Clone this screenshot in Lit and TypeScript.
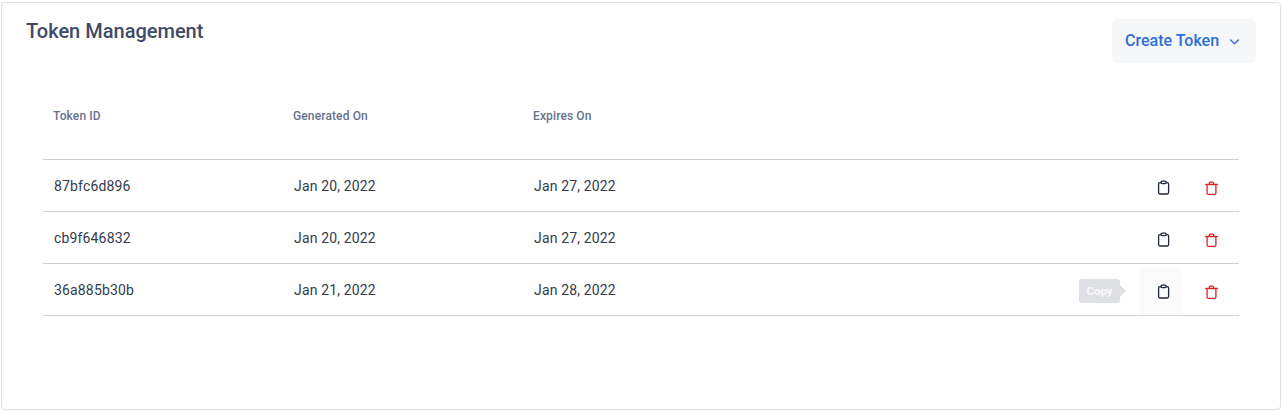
import { LitElement, html, css, svg } from "lit";
import { customElement, property } from "lit/decorators.js";

interface Token {
  id: string;
  generated: string;
  expires: string;
  active?: boolean;
}

const clipboardIcon = html`<svg width="13" height="16" viewBox="0 0 13 16" fill="none" stroke="#1f2937" stroke-width="1.3" stroke-linejoin="round">
  ${svg`<rect x="1.6" y="2.6" width="10" height="11.4" rx="1.4"></rect><rect x="4" y="1.1" width="5.2" height="2.6" rx="1.1" fill="#fff"></rect>`}
</svg>`;

const trashIcon = html`<svg width="14" height="16" viewBox="0 0 14 16" fill="none" stroke="#dc2626" stroke-width="1.3" stroke-linecap="round" stroke-linejoin="round">
  ${svg`<path d="M0.7 4.5H12.3M2.1 4.5V13Q2.1 14.3 3.4 14.3H9.6Q10.9 14.3 10.9 13V4.5M4.1 4.3L4.5 2.7Q4.7 2.1 5.4 2.1H7.6Q8.3 2.1 8.5 2.7L8.9 4.3"></path>`}
</svg>`;

@customElement("token-row")
export class TokenRow extends LitElement {
  @property({ attribute: false }) token!: Token;

  static styles = css`
    :host {
      display: grid;
      grid-template-columns: 240px 240px 1fr auto;
      height: 51px;
      border-bottom: 1px solid #cdd0d9;
      font-size: 14px;
      letter-spacing: 0.16px;
      color: #343b4d;
    }
    .cell {
      padding: 16px 0 0 11px;
      line-height: 20px;
    }
    .actions {
      display: flex;
      gap: 7px;
      padding: 4px 8px 0 0;
    }
    .action {
      position: relative;
      display: flex;
      align-items: center;
      justify-content: center;
      box-sizing: border-box;
      width: 42px;
      height: 47px;
      padding: 1px 0 0 5px;
    }
    .action.remove {
      padding: 1px 0 0 4px;
    }
    .action.active {
      background: #fbfbfb;
      border-radius: 4px 4px 0 0;
    }
    .tooltip {
      position: absolute;
      right: 62px;
      top: 11px;
      width: 41px;
      height: 24px;
      border-radius: 3px;
      background: #dfe0e4;
      color: #f8f8f9;
      font-size: 11.5px;
      font-weight: 700;
      letter-spacing: 0;
      line-height: 24px;
      text-align: center;
    }
    .tooltip::after {
      content: "";
      position: absolute;
      left: 100%;
      top: 6px;
      border: 6px solid transparent;
      border-right: 0;
      border-left-color: #dfe0e4;
    }
  `;

  render() {
    const t = this.token;
    return html`
      <div class="cell">${t.id}</div>
      <div class="cell">${t.generated}</div>
      <div class="cell">${t.expires}</div>
      <div class="actions">
        <div class="action ${t.active ? "active" : ""}">
          ${clipboardIcon}${t.active ? html`<div class="tooltip">Copy</div>` : ""}
        </div>
        <div class="action remove">${trashIcon}</div>
      </div>
    `;
  }
}

@customElement("app-root")
export class AppRoot extends LitElement {
  private tokens: Token[] = [
    { id: "87bfc6d896", generated: "Jan 20, 2022", expires: "Jan 27, 2022" },
    { id: "cb9f646832", generated: "Jan 20, 2022", expires: "Jan 27, 2022" },
    { id: "36a885b30b", generated: "Jan 21, 2022", expires: "Jan 28, 2022", active: true },
  ];

  static styles = css`
    :host {
      display: block;
      box-sizing: border-box;
      height: 411px;
      padding: 2px 2px 1px 1px;
      background: #fff;
      font-family: Roboto, sans-serif;
    }
    .card {
      box-sizing: border-box;
      height: 408px;
      border: 1px solid #dedfe1;
      border-radius: 4px;
    }
    .header {
      display: flex;
      justify-content: space-between;
      align-items: flex-start;
      height: 84px;
      padding: 16px 24px 0;
      box-sizing: border-box;
    }
    .title {
      margin: 0;
      font-size: 20px;
      font-weight: 500;
      line-height: 24px;
      color: #3f4a67;
    }
    .create {
      display: flex;
      align-items: center;
      gap: 10px;
      box-sizing: border-box;
      width: 144px;
      height: 44px;
      padding: 0 0 0 13px;
      border: 0;
      border-radius: 6px;
      background: #f6f7f9;
      color: #2a6fdb;
      font: 500 16px/20px Roboto, sans-serif;
    }
    .chevron {
      margin-top: 2px;
    }
    .table {
      margin: 0 41px;
    }
    .head {
      display: grid;
      grid-template-columns: 240px 240px 1fr;
      box-sizing: border-box;
      height: 73px;
      padding-top: 21px;
      border-bottom: 1px solid #cdd0d9;
      font-size: 12px;
      font-weight: 500;
      letter-spacing: 0.13px;
      line-height: 16px;
      color: #66738f;
    }
    .label {
      padding-left: 10px;
    }
  `;

  render() {
    return html`
      <section class="card">
        <header class="header">
          <h1 class="title">Token Management</h1>
          <button class="create">
            <span>Create Token</span>
            <svg class="chevron" width="11" height="8" viewBox="0 0 11 8" fill="none" stroke="#2a6fdb" stroke-width="1.3" stroke-linecap="round" stroke-linejoin="round">
              <path d="M1.6 2L5.5 5.8L9.4 2"></path>
            </svg>
          </button>
        </header>
        <div class="table">
          <div class="head">
            <div class="label">Token ID</div>
            <div class="label">Generated On</div>
            <div class="label">Expires On</div>
          </div>
          ${this.tokens.map((t) => html`<token-row .token=${t}></token-row>`)}
        </div>
      </section>
    `;
  }
}
